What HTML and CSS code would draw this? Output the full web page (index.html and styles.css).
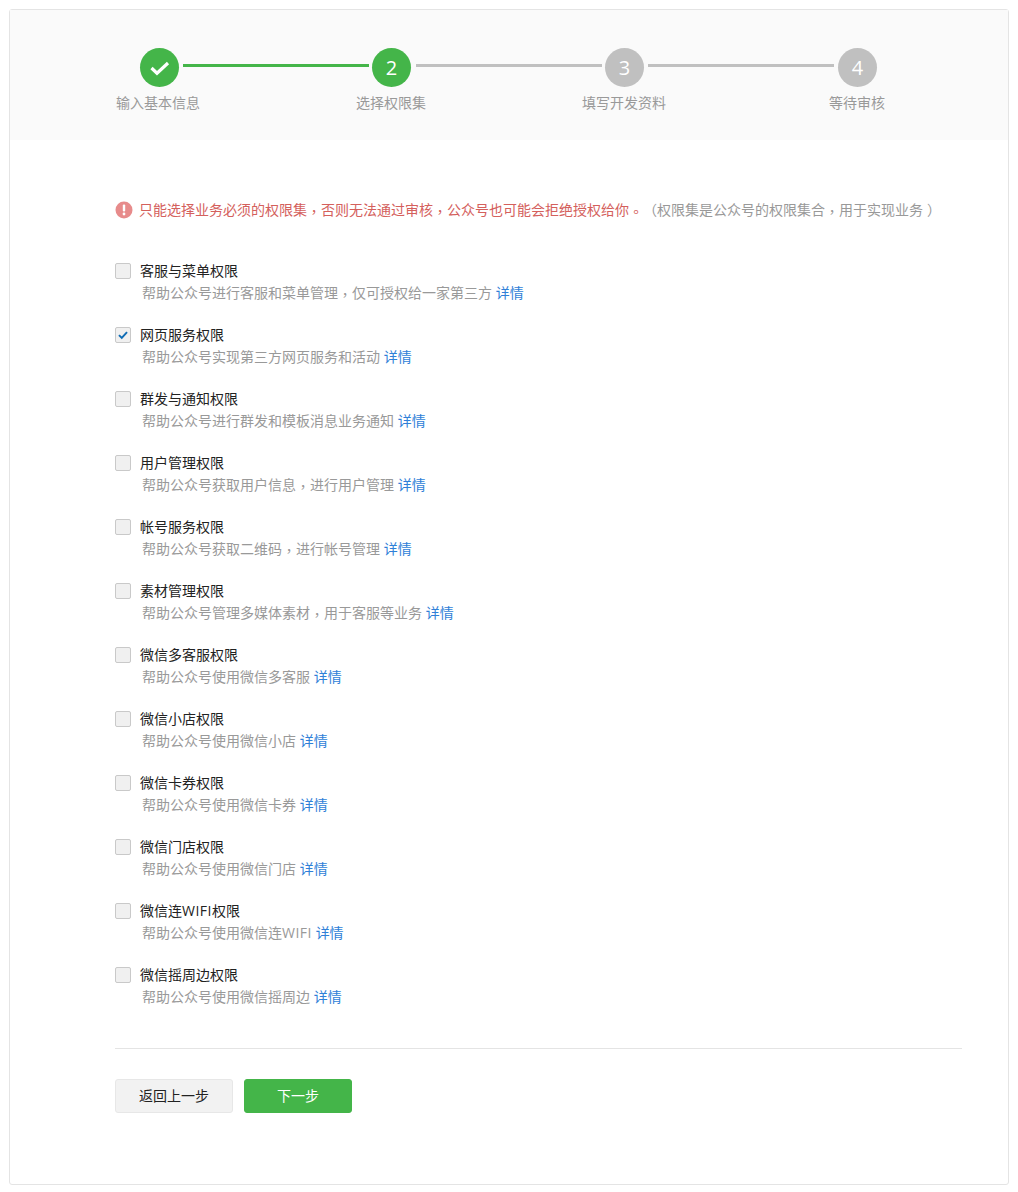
FILE: index.html
```html
<!DOCTYPE html>
<html lang="zh-CN">
<head>
  <meta charset="UTF-8" />
  <title>选择权限集</title>
  <link rel="stylesheet" href="styles.css">
</head>
<body>
  <div class="card">
    <div class="steps">
      <div class="step-track">
        <span class="step-dot done">
          <svg class="step-check" viewBox="0 0 20 16" width="20" height="16"><path d="M1.5 8l5.5 5.2L18 3" fill="none" stroke="#fff" stroke-width="3.2"/></svg>
        </span>
        <span class="step-line done"></span>
        <span class="step-dot done">2</span>
        <span class="step-line"></span>
        <span class="step-dot">3</span>
        <span class="step-line"></span>
        <span class="step-dot">4</span>
      </div>
      <div class="step-labels">
        <span>输入基本信息</span>
        <span>选择权限集</span>
        <span>填写开发资料</span>
        <span>等待审核</span>
      </div>
    </div>

    <div class="content">
      <p class="alert">
        <svg class="alert-icon" viewBox="0 0 18 18" width="18" height="18">
          <circle cx="9" cy="9" r="8.5" fill="#e78b8b"/>
          <rect x="7.8" y="3.6" width="2.4" height="7" rx="1" fill="#fff"/>
          <circle cx="9" cy="13" r="1.4" fill="#fff"/>
        </svg>
        <span class="alert-text">只能选择业务必须的权限集<span class="punct" lang="zh-TW">，</span>否则无法通过审核<span class="punct" lang="zh-TW">，</span>公众号也可能会拒绝授权给你<span class="punct" lang="zh-TW">。</span></span>
        <span class="alert-note">（权限集是公众号的权限集合<span class="punct" lang="zh-TW">，</span>用于实现业务<span class="paren-close">）</span></span>
      </p>

      <ul class="perm-list">
        <li class="perm">
          <span class="box"></span>
          <div class="perm-body">
            <div class="perm-title">客服与菜单权限</div>
            <div class="perm-desc">帮助公众号进行客服和菜单管理<span class="punct" lang="zh-TW">，</span>仅可授权给一家第三方 <a href="#">详情</a></div>
          </div>
        </li>
        <li class="perm">
          <span class="box">
            <svg viewBox="0 0 16 16" width="14" height="14"><path d="M3.4 8.2l3.2 3.2 6-6.6" fill="none" stroke="#0f6cb5" stroke-width="2.2"/></svg>
          </span>
          <div class="perm-body">
            <div class="perm-title">网页服务权限</div>
            <div class="perm-desc">帮助公众号实现第三方网页服务和活动 <a href="#">详情</a></div>
          </div>
        </li>
        <li class="perm">
          <span class="box"></span>
          <div class="perm-body">
            <div class="perm-title">群发与通知权限</div>
            <div class="perm-desc">帮助公众号进行群发和模板消息业务通知 <a href="#">详情</a></div>
          </div>
        </li>
        <li class="perm">
          <span class="box"></span>
          <div class="perm-body">
            <div class="perm-title">用户管理权限</div>
            <div class="perm-desc">帮助公众号获取用户信息<span class="punct" lang="zh-TW">，</span>进行用户管理 <a href="#">详情</a></div>
          </div>
        </li>
        <li class="perm">
          <span class="box"></span>
          <div class="perm-body">
            <div class="perm-title">帐号服务权限</div>
            <div class="perm-desc">帮助公众号获取二维码<span class="punct" lang="zh-TW">，</span>进行帐号管理 <a href="#">详情</a></div>
          </div>
        </li>
        <li class="perm">
          <span class="box"></span>
          <div class="perm-body">
            <div class="perm-title">素材管理权限</div>
            <div class="perm-desc">帮助公众号管理多媒体素材<span class="punct" lang="zh-TW">，</span>用于客服等业务 <a href="#">详情</a></div>
          </div>
        </li>
        <li class="perm">
          <span class="box"></span>
          <div class="perm-body">
            <div class="perm-title">微信多客服权限</div>
            <div class="perm-desc">帮助公众号使用微信多客服 <a href="#">详情</a></div>
          </div>
        </li>
        <li class="perm">
          <span class="box"></span>
          <div class="perm-body">
            <div class="perm-title">微信小店权限</div>
            <div class="perm-desc">帮助公众号使用微信小店 <a href="#">详情</a></div>
          </div>
        </li>
        <li class="perm">
          <span class="box"></span>
          <div class="perm-body">
            <div class="perm-title">微信卡券权限</div>
            <div class="perm-desc">帮助公众号使用微信卡券 <a href="#">详情</a></div>
          </div>
        </li>
        <li class="perm">
          <span class="box"></span>
          <div class="perm-body">
            <div class="perm-title">微信门店权限</div>
            <div class="perm-desc">帮助公众号使用微信门店 <a href="#">详情</a></div>
          </div>
        </li>
        <li class="perm">
          <span class="box"></span>
          <div class="perm-body">
            <div class="perm-title">微信连<span class="latin">WIFI</span>权限</div>
            <div class="perm-desc">帮助公众号使用微信连<span class="latin">WIFI</span> <a href="#">详情</a></div>
          </div>
        </li>
        <li class="perm">
          <span class="box"></span>
          <div class="perm-body">
            <div class="perm-title">微信摇周边权限</div>
            <div class="perm-desc">帮助公众号使用微信摇周边 <a href="#">详情</a></div>
          </div>
        </li>
      </ul>

      <div class="actions">
        <button class="btn" type="button">返回上一步</button>
        <button class="btn btn-primary" type="button">下一步</button>
      </div>
    </div>
  </div>
</body>
</html>
```

FILE: styles.css
```css
html, body {
  margin: 0;
  padding: 0;
  background: #ffffff;
}
body {
  padding: 9px;
  font-family: "Open Sans", "Noto Sans CJK SC", sans-serif;
  font-size: 14px;
  line-height: 22px;
  color: #222222;
}
.card {
  width: 998px;
  height: 1174px;
  border: 1px solid #e4e4e4;
  border-radius: 3px;
  background: #ffffff;
}
.punct {
  font-family: "Noto Sans CJK TC", sans-serif;
  line-height: 0;
  vertical-align: -2px;
}
.latin {
  letter-spacing: 0.5px;
}

/* Steps */
.steps {
  height: 130px;
  box-sizing: border-box;
  padding-top: 38px;
  background: #fafafa;
}
.step-track {
  display: flex;
  align-items: center;
  margin-left: 130px;
}
.step-dot {
  display: flex;
  flex: none;
  align-items: center;
  justify-content: center;
  width: 39px;
  height: 39px;
  border-radius: 50%;
  background: #c0c0c0;
  color: #ffffff;
  font-size: 20px;
}
.step-dot.done {
  background: #44b549;
}
.step-line {
  flex: none;
  width: 186px;
  height: 3px;
  margin: -4px 3px 0 4px;
  background: #c0c0c0;
}
.step-line:nth-child(4) {
  margin-left: 5px;
}
.step-line:nth-child(6) {
  margin-right: 4px;
}
.step-line.done {
  background: #44b549;
}
.step-labels {
  display: grid;
  grid-template-columns: repeat(4, 233px);
  margin: 5px 0 0 31.5px;
  text-align: center;
  color: #999999;
}

/* Content */
.content {
  padding: 59px 46px 0 105px;
}
.alert {
  display: flex;
  align-items: center;
  margin: 0 0 39px;
}
.alert-icon {
  flex: none;
  margin-right: 6px;
}
.alert-text {
  color: #d4605c;
}
.alert-note {
  color: #999999;
}
.paren-close {
  margin-left: 4px;
}
.perm-list {
  margin: 0;
  padding: 0;
  list-style: none;
}
.perm {
  display: flex;
  margin-bottom: 20px;
}
.box {
  flex: none;
  box-sizing: border-box;
  width: 16px;
  height: 16px;
  margin: 3px 9px 0 0;
  border: 1px solid #c9c9c9;
  border-radius: 2px;
  background: #f0f0f0;
}
.box svg {
  display: block;
}
.perm-desc {
  margin-left: 2px;
  color: #999999;
}
.perm-desc a {
  color: #2f7fd8;
  text-decoration: none;
}

/* Buttons */
.actions {
  display: flex;
  gap: 11px;
  margin-top: 40px;
  padding-top: 30px;
  border-top: 1px solid #e4e4e4;
}
.btn {
  width: 118px;
  height: 34px;
  padding: 0;
  border: 1px solid #e7e7e7;
  border-radius: 3px;
  background: #f2f2f2;
  color: #222222;
  font: inherit;
}
.btn-primary {
  width: 108px;
  border-color: #44b549;
  background: #44b549;
  color: #ffffff;
}
```
